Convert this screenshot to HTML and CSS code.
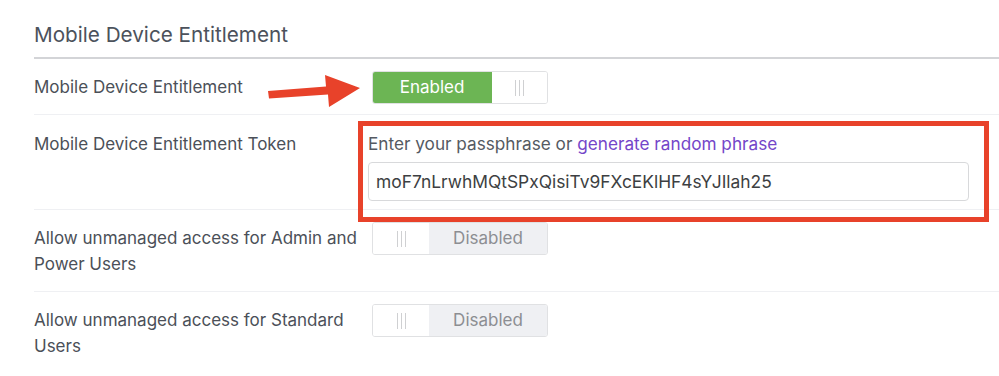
FILE: index.html
```html
<!DOCTYPE html>
<html lang="en">
<head>
<meta charset="utf-8">
<title>Mobile Device Entitlement</title>
<link rel="stylesheet" href="styles.css">
</head>
<body>
<div class="page">
  <h2 class="section-title">Mobile Device Entitlement</h2>

  <div class="row">
    <div class="label">Mobile Device Entitlement</div>
    <div class="control">
      <div class="toggle">
        <span class="toggle-on">Enabled</span>
        <span class="toggle-grip"><i></i><i></i><i></i></span>
      </div>
    </div>
    <svg class="annot-arrow" width="94" height="36" viewBox="0 0 94 36" aria-hidden="true">
      <polygon points="0,17 58,12.5 57,1 92,14 61,33 60,20.5 1,24.5" fill="#e8422a"/>
    </svg>
  </div>

  <div class="row row-token">
    <div class="label">Mobile Device Entitlement Token</div>
    <div class="control">
      <div class="help">Enter your passphrase or <a class="link" href="#">generate random phrase</a></div>
      <input class="text-input" type="text" value="moF7nLrwhMQtSPxQisiTv9FXcEKlHF4sYJIlah25">
      <div class="annot-box"></div>
    </div>
  </div>

  <div class="row">
    <div class="label">Allow unmanaged access for Admin and Power Users</div>
    <div class="control">
      <div class="toggle">
        <span class="toggle-grip"><i></i><i></i><i></i></span>
        <span class="toggle-off">Disabled</span>
      </div>
    </div>
  </div>

  <div class="row row-last">
    <div class="label">Allow unmanaged access for Standard Users</div>
    <div class="control">
      <div class="toggle">
        <span class="toggle-grip"><i></i><i></i><i></i></span>
        <span class="toggle-off">Disabled</span>
      </div>
    </div>
  </div>
</div>
</body>
</html>
```

FILE: styles.css
```css
html, body {
  margin: 0;
  padding: 0;
  background: #ffffff;
  overflow: hidden;
}

body {
  font-family: Inter, "Noto Sans", "Liberation Sans", sans-serif;
  font-size: 17px;
  color: #4b5058;
}

.page {
  position: relative;
  margin-left: 34px;
  width: 1100px;
}

.section-title {
  margin: 0;
  padding: 21px 0 8px;
  font-size: 20.7px;
  line-height: 28px;
  font-weight: 400;
  color: #4c525c;
  border-bottom: 2px solid #d3d4d7;
}

.row {
  position: relative;
  display: flex;
  align-items: flex-start;
  padding: 12px 0 9px;
  border-bottom: 1px solid #eff0f3;
}

.row-token {
  padding-bottom: 8px;
}

.row-token .label {
  padding-top: 4px;
}

.row-last {
  border-bottom: none;
}

.label {
  width: 334px;
  flex: none;
  padding: 3px 0 5px;
  line-height: 26px;
  color: #4b5058;
}

.control {
  position: relative;
  flex: none;
  width: 601px;
}

.toggle {
  display: flex;
  width: 176px;
  height: 33px;
  margin-left: 4px;
  box-sizing: border-box;
  border: 1px solid #e0e1e3;
  border-radius: 3px;
  overflow: hidden;
}

.toggle-on {
  width: 120px;
  margin: -1px 0 -1px -1px;
  background: #6cb554;
  color: #ffffff;
  display: flex;
  align-items: center;
  justify-content: center;
  line-height: 1;
}

.toggle-off {
  flex: 1;
  background: #eff0f3;
  color: #8c8e92;
  display: flex;
  align-items: center;
  justify-content: center;
  line-height: 1;
}

.toggle-grip {
  width: 56px;
  flex: none;
  display: flex;
  align-items: center;
  justify-content: center;
  gap: 3px;
  background: #ffffff;
}

.toggle-on + .toggle-grip {
  flex: 1;
}

.toggle-grip i {
  display: block;
  width: 1px;
  height: 16px;
  background: #cfd0d2;
}

.help {
  padding-top: 4px;
  line-height: 26px;
  font-size: 17.2px;
  color: #555a62;
}

.link {
  color: #7446c9;
  text-decoration: none;
}

.text-input {
  display: block;
  box-sizing: border-box;
  width: 601px;
  height: 39px;
  margin: 5px 0 0;
  padding: 0 7px;
  font-family: Inter, "Noto Sans", "Liberation Sans", sans-serif;
  font-size: 17.4px;
  color: #3d3f42;
  border: 1px solid #d8d9db;
  border-radius: 4px;
  background: #ffffff;
  outline: none;
}

.annot-box {
  position: absolute;
  left: -10px;
  top: -6px;
  width: 631px;
  height: 101px;
  box-sizing: border-box;
  border: 5px solid #e8422a;
  pointer-events: none;
}

.annot-arrow {
  position: absolute;
  left: 234px;
  top: 15px;
}
```
